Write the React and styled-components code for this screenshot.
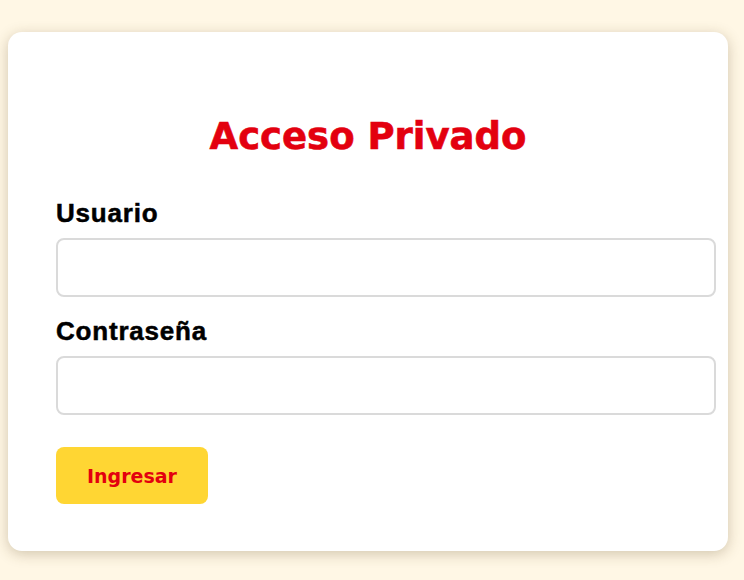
import React from 'react';
import styled, { createGlobalStyle } from 'styled-components';

const GlobalStyle = createGlobalStyle`
  body {
    margin: 0;
    background-color: #fff7e5;
    font-family: "Liberation Sans", Arial, sans-serif;
  }
`;

function App() {
  return (
    <Page>
      <GlobalStyle />
      <LoginCard>
        <Title>Acceso Privado</Title>
        <Label htmlFor="usuario">Usuario</Label>
        <Input id="usuario" type="text" />
        <Label htmlFor="clave" $gap={19}>Contraseña</Label>
        <Input id="clave" type="password" />
        <SubmitButton type="button">Ingresar</SubmitButton>
      </LoginCard>
    </Page>
  );
}

export default App;

const Page = styled.div`
  padding: 32px 16px 30px 8px;
`;

const LoginCard = styled.div`
  width: 720px;
  box-sizing: border-box;
  padding: 83px 48px 47px 48px;
  background-color: #fff;
  border-radius: 14px;
  box-shadow: 0 3px 14px rgba(90, 70, 30, 0.28);
  display: flex;
  flex-direction: column;
  align-items: flex-start;
`;

const Title = styled.h2`
  align-self: stretch;
  margin: 0 0 39px 0;
  text-align: center;
  font-family: "DejaVu Sans", sans-serif;
  font-size: 37px;
  line-height: 44px;
  font-weight: 700;
  color: #e3000f;
  -webkit-text-stroke: 0.6px #e3000f;
`;

const Label = styled.label`
  display: block;
  margin-top: ${(p) => p.$gap || 0}px;
  margin-bottom: 10px;
  font-size: 26px;
  line-height: 30px;
  font-weight: 700;
  letter-spacing: 0.8px;
  color: #000;
  -webkit-text-stroke: 0.5px #000;
`;

const Input = styled.input`
  width: 100%;
  height: 25px;
  padding: 15px 16px;
  border: 2px solid #dadada;
  border-radius: 8px;
  outline: none;
  font-size: 18px;
  box-sizing: content-box;
  margin: 0;
`;

const SubmitButton = styled.button`
  margin-top: 32px;
  width: 152px;
  height: 57px;
  border: none;
  border-radius: 8px;
  background-color: #ffd633;
  color: #e3000f;
  font-family: "DejaVu Sans", sans-serif;
  font-size: 19px;
  font-weight: 700;
  cursor: pointer;
  display: flex;
  align-items: center;
  justify-content: center;
`;
